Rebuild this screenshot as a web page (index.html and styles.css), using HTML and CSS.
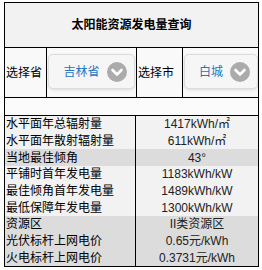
FILE: index.html
```html
<!DOCTYPE html>
<html lang="zh-CN">
<head>
    <meta charset="UTF-8">
    <title>太阳能资源发电量查询</title>
    <link rel="stylesheet" href="styles.css">
</head>
<body>
    <div class="panel">
        <div class="title">太阳能资源发电量查询</div>

        <div class="pick">
            <div class="label">选择省</div>
            <div class="cell">
                <div class="select-btn">
                    <span class="select-text">吉林省</span>
                    <span class="arrow">
                        <svg width="20" height="20" viewBox="0 0 20 20"><circle cx="10" cy="10" r="10" fill="#ababab"/><path d="M5.5 8 L10 12.5 L14.5 8" fill="none" stroke="#fff" stroke-width="2.6" stroke-linecap="round" stroke-linejoin="round"/></svg>
                    </span>
                </div>
            </div>
            <div class="label">选择市</div>
            <div class="cell last">
                <div class="select-btn">
                    <span class="select-text">白城</span>
                    <span class="arrow">
                        <svg width="20" height="20" viewBox="0 0 20 20"><circle cx="10" cy="10" r="10" fill="#ababab"/><path d="M5.5 8 L10 12.5 L14.5 8" fill="none" stroke="#fff" stroke-width="2.6" stroke-linecap="round" stroke-linejoin="round"/></svg>
                    </span>
                </div>
            </div>
        </div>

        <div class="spacer"></div>

        <div class="data">
            <div class="name">水平面年总辐射量</div><div class="value">1417kWh/㎡</div>
            <div class="name">水平面年散射辐射量</div><div class="value">611kWh/㎡</div>
            <div class="name dark">当地最佳倾角</div><div class="value dark">43°</div>
            <div class="name">平铺时首年发电量</div><div class="value">1183kWh/kW</div>
            <div class="name">最佳倾角首年发电量</div><div class="value">1489kWh/kW</div>
            <div class="name">最低保障年发电量</div><div class="value">1300kWh/kW</div>
            <div class="name dark">资源区</div><div class="value dark">II类资源区</div>
            <div class="name dark">光伏标杆上网电价</div><div class="value dark">0.65元/kWh</div>
            <div class="name dark">火电标杆上网电价</div><div class="value dark">0.3731元/kWh</div>
        </div>
    </div>
</body>
</html>
```

FILE: styles.css
```css
body {
    margin: 0;
    padding: 2px 0 0 4px;
    background-color: #ffffff;
    font-family: "Liberation Sans", "Noto Sans CJK SC", sans-serif;
    font-size: 12px;
    line-height: 14px;
    color: #111;
}

.panel {
    width: 255px;
    border: 1px solid #000;
    box-sizing: border-box;
}

.title {
    height: 44px;
    background-color: #f2f2f2;
    border-bottom: 1px solid #000;
    display: flex;
    align-items: center;
    justify-content: center;
    font-weight: bold;
    color: #000;
}

.pick {
    display: grid;
    grid-template-columns: 42px 90px 46px 1fr;
    height: 49px;
    border-bottom: 1px solid #000;
    background-color: #f9f9f9;
}

.label {
    border-right: 1px solid #000;
    display: flex;
    align-items: center;
    padding-left: 1px;
    color: #000;
}

.cell {
    border-right: 1px solid #000;
    padding: 6px 1px 0 1px;
}

.cell.last {
    border-right: none;
    padding-right: 0;
}

.select-btn {
    height: 35px;
    box-sizing: border-box;
    border: 1px solid #dcdcdc;
    border-radius: 5px;
    background-color: #f6f6f6;
    box-shadow: 0 1px 3px rgba(0, 0, 0, 0.12);
    display: flex;
    align-items: center;
    padding: 0 7px 0 12px;
}

.select-text {
    flex: 1;
    text-align: center;
    margin-right: 5px;
    color: #2474c0;
}

.arrow {
    width: 20px;
    height: 20px;
    display: flex;
}

.spacer {
    height: 17px;
    border-bottom: 1px solid #000;
    background-color: #fbfbfb;
}

.data {
    display: grid;
    grid-template-columns: 131px 1fr;
    grid-template-rows: repeat(9, minmax(0, 1fr));
    height: 150px;
}

.name,
.value {
    display: flex;
    align-items: center;
    overflow: hidden;
    white-space: nowrap;
    background-color: #f2f2f2;
}

.name {
    border-right: 1px solid #000;
    padding-left: 1px;
    color: #000;
}

.value {
    justify-content: center;
    color: #222;
}

.dark {
    background-color: #dcdcdc;
}
```
